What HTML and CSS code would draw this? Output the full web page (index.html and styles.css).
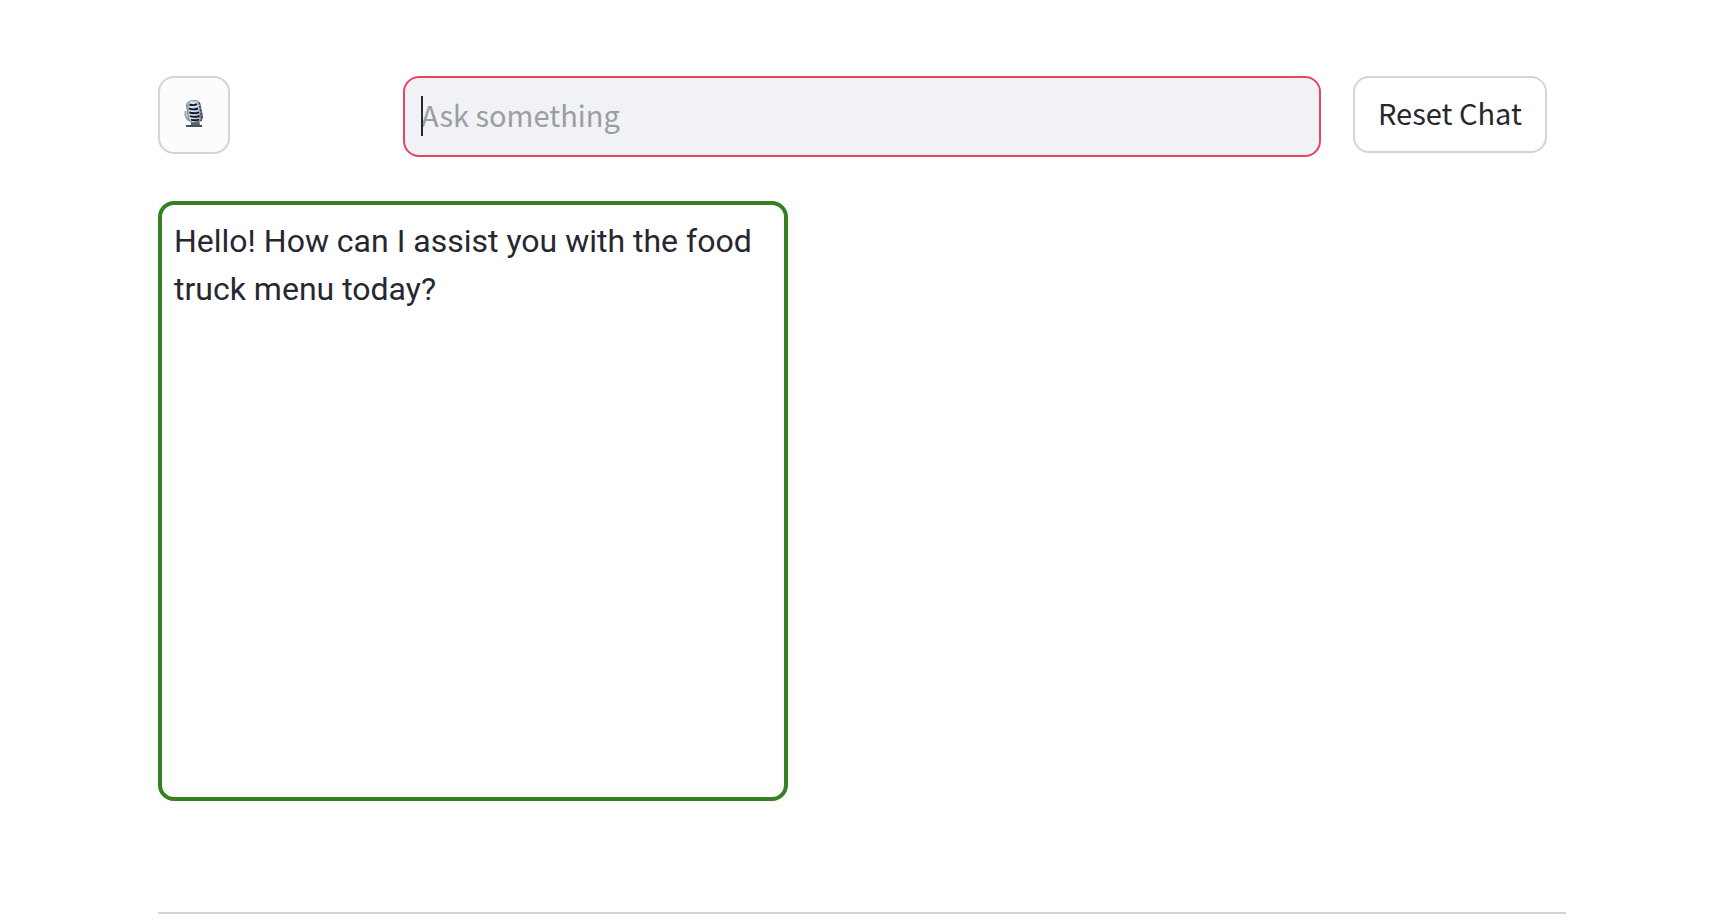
FILE: index.html
```html
<!DOCTYPE html>
<html lang="en">
<head>
    <meta charset="UTF-8">
    <meta name="viewport" content="width=device-width, initial-scale=1.0">
    <title>Food Truck Chat</title>
    <link rel="stylesheet" href="styles.css">
</head>
<body>
    <main class="page">
        <form class="toolbar">
            <button class="btn mic-btn" type="button" aria-label="Record">
                <svg class="mic-icon" viewBox="0 0 20 28" aria-hidden="true">
                    <defs>
                        <linearGradient id="chrome">
                            <stop offset="0" stop-color="#8b9299"/>
                            <stop offset="0.3" stop-color="#dbe9fb"/>
                            <stop offset="0.75" stop-color="#b4c8e2"/>
                            <stop offset="1" stop-color="#454a50"/>
                        </linearGradient>
                    </defs>
                    <!-- stand -->
                    <path d="M7 20h8l1 5H7z" fill="#5b6061"/>
                    <path d="M2 25h16v2H2z" fill="#4b5051"/>
                    <path d="M1.500 11v4q1 5 5 5.500" fill="none" stroke="#9da2a3" stroke-width="2"/>
                    <!-- head -->
                    <path d="M2.500 5Q3 2 6 1L11 .5Q15 .5 16 3.500L18.500 16Q19 20 15.500 21.500L9 22.500Q5 22 4.300 18z" fill="url(#chrome)" stroke="#6d747b" stroke-width="0.8"/>
                    <!-- grille -->
                    <path d="M5.500 4.500q4 1.500 7.500-.5M5 8.500q4 1.800 9 0M5.500 12.300q4 1.800 9.500 0M6 16q4 1.800 9.500 0M7 19.700q4 1.200 8 0" fill="none" stroke="#10141c" stroke-width="1.900"/>
                    <path d="M15 2.500l3 15q0 2.500-1.500 3.500" fill="none" stroke="#3c4146" stroke-width="1.500" stroke-dasharray="2 1.500"/>
                </svg>
            </button>
            <div class="ask-field">
                <input class="ask-input" type="text" placeholder="Ask something" aria-label="Ask something">
                <span class="caret"></span>
            </div>
            <button class="btn reset-btn" type="reset">Reset Chat</button>
        </form>

        <section class="chat">
            <div class="chat-box">
                <p class="message">Hello! How can I assist you with the food truck menu today?</p>
            </div>
        </section>

        <hr class="divider">
    </main>
</body>
</html>
```
FILE: styles.css
```css
* {
    box-sizing: border-box;
}

body {
    margin: 0;
    background: #fff;
    color: #262730;
    font-family: "Noto Sans CJK SC", "Noto Sans", sans-serif;
}

.page {
    padding: 76px 144px 0 158px;
}

.toolbar {
    display: grid;
    grid-template-columns: 213px 1fr 213px;
    gap: 32px;
    align-items: start;
}

.btn {
    border: 2px solid #d4d4d6;
    border-radius: 16px;
    background: #fff;
    color: inherit;
    font: inherit;
    font-size: 29px;
    line-height: 40px;
    cursor: pointer;
}

.mic-btn {
    display: flex;
    align-items: center;
    justify-content: center;
    width: 72px;
    height: 78px;
    padding: 0 0 2px;
    background: #fcfcfc;
}

.mic-icon {
    width: 20px;
    height: 28px;
}

.reset-btn {
    justify-self: start;
    height: 77px;
    padding: 0 23px 6px;
    white-space: nowrap;
}

.ask-field {
    position: relative;
}

.ask-input {
    display: block;
    width: 100%;
    height: 81px;
    padding: 0 16px 6px;
    border: 2px solid #e84265;
    border-radius: 16px;
    outline: none;
    background: #f0f2f6;
    color: inherit;
    font: inherit;
    font-size: 29px;
}

.ask-input::placeholder {
    color: #9c9da3;
    opacity: 1;
}

.caret {
    position: absolute;
    top: 20px;
    left: 18px;
    width: 2px;
    height: 40px;
    background: #262730;
}

/* the shadow is cut off at the chat area's edges */
.chat {
    margin-top: 44px;
    padding-right: 32px;
    overflow: hidden;
}

.chat-box {
    max-width: 630px;
    min-height: 600px;
    padding: 12px;
    border: 4px solid #368024;
    border-radius: 16px;
    box-shadow: 0 0 20px rgba(0, 0, 0, 0.05);
}

.message {
    margin: 0;
    font-family: Roboto, sans-serif;
    font-size: 32px;
    line-height: 48px;
}

.divider {
    height: 2px;
    margin: 111px 0 0;
    border: 0;
    background: #d4d4d6;
}
```
